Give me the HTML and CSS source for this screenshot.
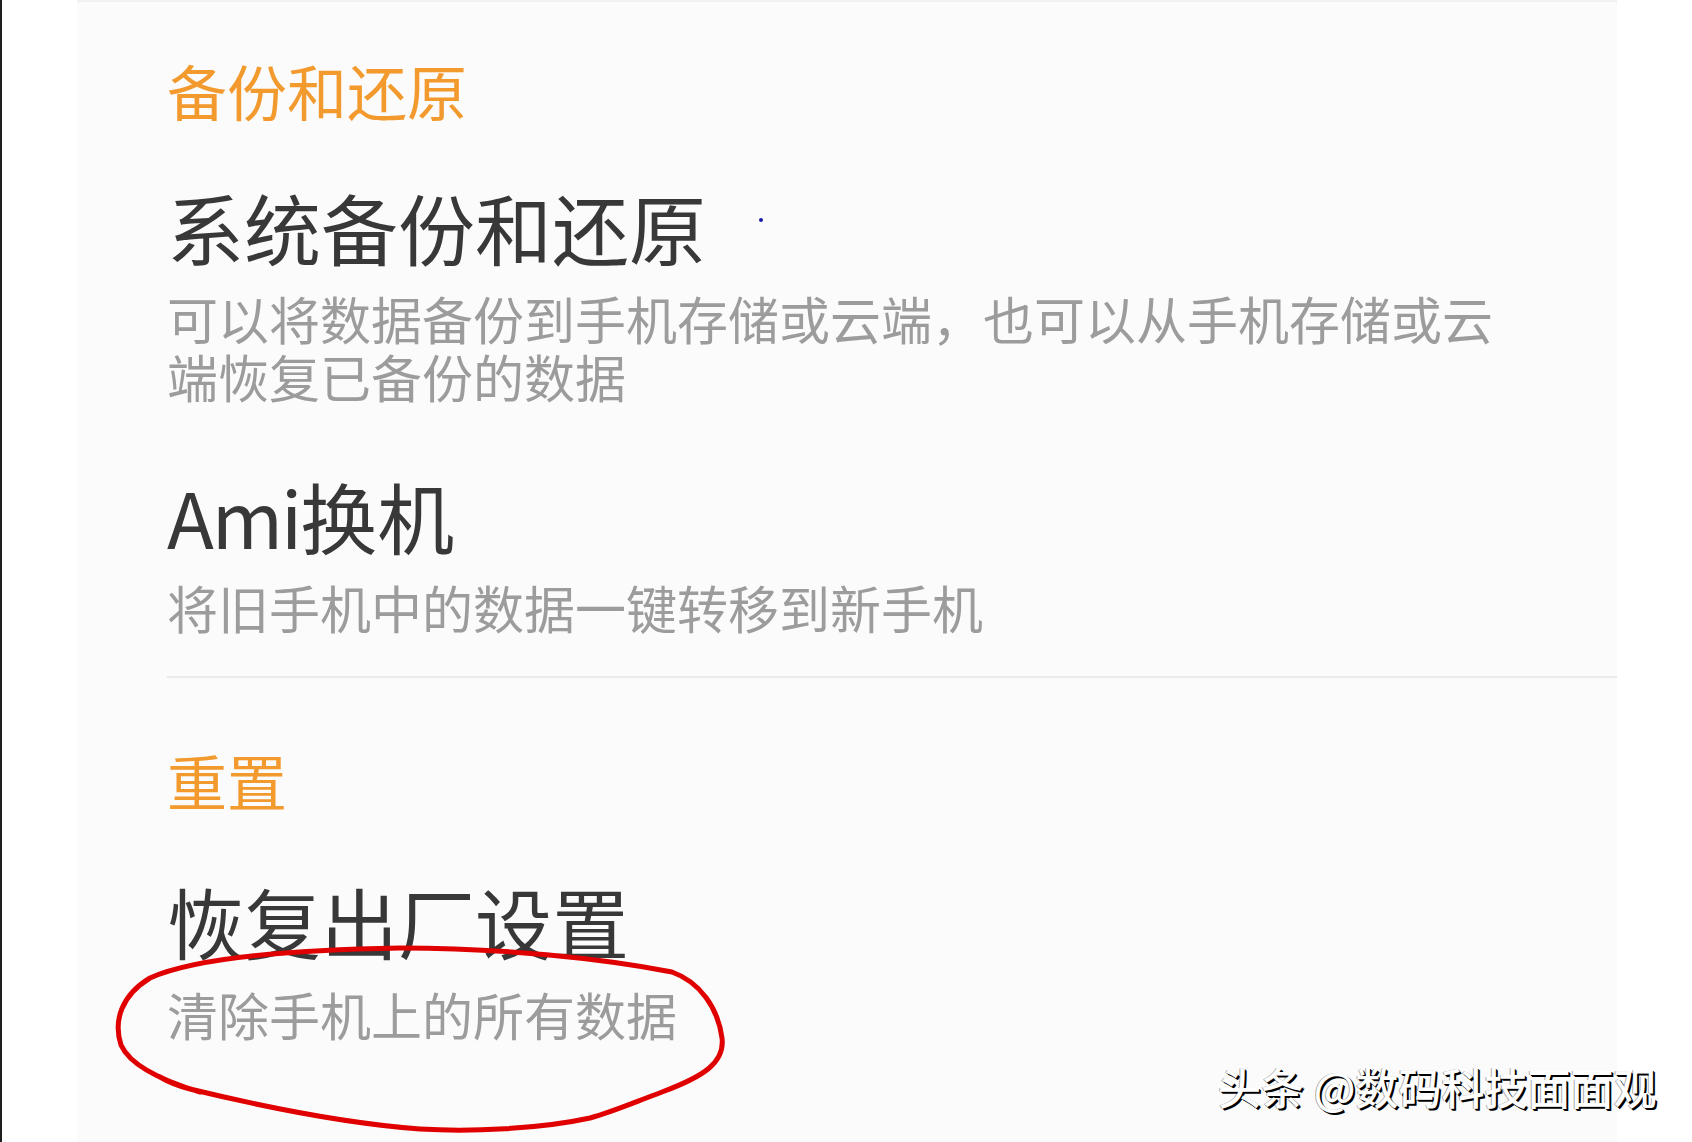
FILE: index.html
```html
<!DOCTYPE html>
<html lang="zh-CN">
<head>
<meta charset="utf-8">
<title>备份和还原</title>
<link rel="stylesheet" href="styles.css">
</head>
<body>
<div class="page">
  <div class="edge"></div>
  <main class="panel">
    <section class="group">
      <h2 class="group-head">备份和还原</h2>
      <div class="item">
        <div class="item-title">系统备份和还原</div>
        <div class="item-desc">可以将数据备份到手机存储或云端，也可以从手机存储或云端恢复已备份的数据</div>
      </div>
      <div class="item">
        <div class="item-title"><span class="latin">Ami</span>换机</div>
        <div class="item-desc">将旧手机中的数据一键转移到新手机</div>
      </div>
    </section>
    <div class="divider"></div>
    <section class="group group-reset">
      <h2 class="group-head">重置</h2>
      <div class="item">
        <div class="item-title">恢复出厂设置</div>
        <div class="item-desc">清除手机上的所有数据</div>
      </div>
    </section>
  </main>
  <span class="dot"></span>
  <svg class="circle" width="1692" height="1142" viewBox="0 0 1692 1142">
    <path d="M 200 1092 C 160 1080, 130 1065, 121 1045 C 113 1020, 122 995, 150 978 C 190 960, 280 950, 400 948 C 500 948, 600 958, 672 972 C 700 982, 718 1008, 722 1038 C 725 1062, 705 1076, 662 1092 C 630 1104, 612 1112, 590 1118 C 540 1129, 470 1132, 420 1129 C 340 1123, 260 1106, 190 1089 C 175 1085, 165 1080, 160 1077" />
  </svg>
  <div class="watermark">头条 @数码科技面面观</div>
</div>
</body>
</html>
```

FILE: styles.css
```css
html, body {
  margin: 0;
  padding: 0;
  background: #ffffff;
}

.page {
  position: relative;
  width: 1692px;
  height: 1142px;
  overflow: hidden;
  display: flex;
  font-family: "Noto Sans CJK SC", "Noto Sans", sans-serif;
}

.edge {
  width: 2px;
  flex: none;
  background: #1e1e1e;
}

.panel {
  margin-left: 75px;
  width: 1540px;
  flex: none;
  background: #fbfbfb;
  border-top: 2px solid #f1f1f1;
  box-sizing: border-box;
  padding: 48px 0 0 90px;
}

.group-head {
  margin: 0;
  font-size: 60px;
  line-height: 80px;
  font-weight: 400;
  color: #f39a2f;
}

.item {
  margin-top: 52px;
}

.item + .item {
  margin-top: 66px;
}

.item-title {
  font-size: 77px;
  line-height: 90px;
  color: #383838;
}

.latin {
  letter-spacing: -2px;
}

.item-desc {
  margin-top: 17px;
  width: 1350px;
  font-size: 51px;
  line-height: 58px;
  color: #9c9c9c;
}

.divider {
  margin-top: 40px;
  height: 2px;
  background: #ebebeb;
}

.group-reset {
  margin-top: 62px;
}

.group-reset .item {
  margin-top: 56px;
}

.group-reset .item-desc {
  margin-top: 19px;
}

.dot {
  position: absolute;
  left: 759px;
  top: 218px;
  width: 4px;
  height: 4px;
  border-radius: 50%;
  background: #1a1aa8;
}

.circle {
  position: absolute;
  left: 0;
  top: 0;
  pointer-events: none;
}

.circle path {
  fill: none;
  stroke: #e00000;
  stroke-width: 5;
  stroke-linecap: round;
  stroke-linejoin: round;
}

.watermark {
  position: absolute;
  left: 1218px;
  top: 1065px;
  font-size: 43px;
  line-height: 43px;
  font-weight: 500;
  color: #ffffff;
  white-space: nowrap;
  text-shadow: 2px 2px 0 #000000, 1px 1px 0 #000000, -1px 0 0 rgba(0,0,0,0.35);
}
```
